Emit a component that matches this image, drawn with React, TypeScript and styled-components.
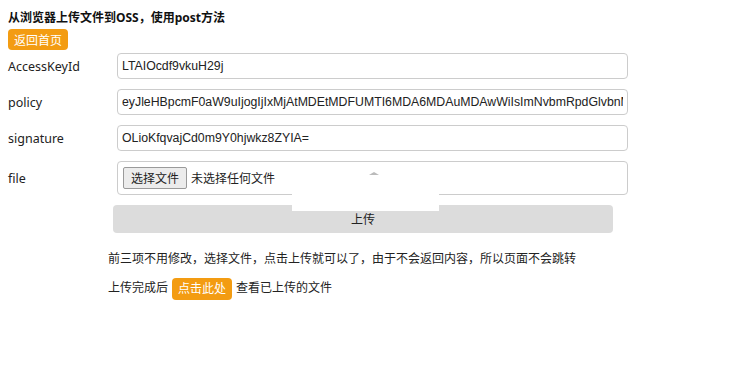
import React from 'react';
import styled, { createGlobalStyle } from 'styled-components';

const GlobalStyle = createGlobalStyle`
  body {
    margin: 8px;
    background: #fff;
    color: #222;
    font-family: "Noto Sans", "Noto Sans CJK SC", sans-serif;
    font-size: 12px;
  }
`;

const Page = styled.div`
  position: relative;
  width: 724px;
`;

const Title = styled.h1`
  margin: 0;
  font-size: 12px;
  line-height: 20px;
  font-weight: 700;
  color: #111;
`;

const OrangeButton = styled.a<{ $inline?: boolean }>`
  display: inline-flex;
  align-items: center;
  justify-content: center;
  height: ${(p) => (p.$inline ? '22px' : '21px')};
  padding: 0 6px;
  margin: ${(p) => (p.$inline ? '0 4px 0 4px' : '1px 0 0')};
  background: #f39c12;
  color: #fff;
  border-radius: 4px;
  font-size: 12px;
  text-decoration: none;
  vertical-align: middle;
`;

const Form = styled.form`
  display: grid;
  grid-template-columns: 109px 511px;
  row-gap: 10px;
  margin-top: 3px;
  align-items: center;
`;

const Label = styled.label`
  font-size: 12.5px;
  color: #222;
`;

const Input = styled.input`
  box-sizing: border-box;
  width: 100%;
  height: 26px;
  padding: 0 4px;
  border: 1px solid #ccc;
  border-radius: 4px;
  font-family: "Liberation Sans", Arial, sans-serif;
  font-size: 12.3px;
  color: #222;
  outline: none;
`;

const FileBox = styled.div`
  box-sizing: border-box;
  height: 34px;
  display: flex;
  align-items: center;
  gap: 4px;
  padding: 0 5px;
  border: 1px solid #ccc;
  border-radius: 4px;
`;

const FileButton = styled.span`
  display: inline-flex;
  align-items: center;
  height: 20px;
  padding: 0 7px;
  background: #ececec;
  border: 1px solid #9a9a9a;
  border-radius: 2px;
  font-size: 12px;
  color: #222;
`;

const FileText = styled.span`
  font-size: 12px;
  color: #222;
`;

const Submit = styled.button`
  grid-column: 1 / 3;
  margin: 0 0 0 105px;
  width: 500px;
  height: 28px;
  border: none;
  border-radius: 4px;
  background: #dcdcdc;
  font-family: "Noto Sans", "Noto Sans CJK SC", sans-serif;
  font-size: 12px;
  color: #222;
`;

const Note = styled.p`
  margin: 16px 0 0 100px;
  line-height: 20px;
  font-size: 12px;
  color: #222;
`;

const NoteLine = styled.p`
  margin: 8px 0 0 100px;
  line-height: 22px;
  font-size: 12px;
  color: #222;
`;

const Cover = styled.div`
  position: absolute;
  left: 284px;
  top: 161px;
  width: 147px;
  height: 42px;
  background: #fff;
`;

const Caret = styled.div`
  position: absolute;
  left: 77px;
  top: 3px;
  width: 0;
  height: 0;
  border-left: 5px solid transparent;
  border-right: 5px solid transparent;
  border-bottom: 3px solid #bbb;
`;

export default function App() {
  return (
    <Page>
      <GlobalStyle />
      <Title>从浏览器上传文件到OSS，使用post方法</Title>
      <OrangeButton href="#">返回首页</OrangeButton>
      <Form onSubmit={(e) => e.preventDefault()}>
        <Label>AccessKeyId</Label>
        <Input defaultValue="LTAIOcdf9vkuH29j" />
        <Label>policy</Label>
        <Input defaultValue="eyJleHBpcmF0aW9uIjogIjIxMjAtMDEtMDFUMTI6MDA6MDAuMDAwWiIsImNvbmRpdGlvbnMiOlt7ImJ1Y2tldCI6" />
        <Label>signature</Label>
        <Input defaultValue="OLioKfqvajCd0m9Y0hjwkz8ZYIA=" />
        <Label>file</Label>
        <FileBox>
          <FileButton>选择文件</FileButton>
          <FileText>未选择任何文件</FileText>
        </FileBox>
        <Submit type="submit">上传</Submit>
      </Form>
      <Note>前三项不用修改，选择文件，点击上传就可以了，由于不会返回内容，所以页面不会跳转</Note>
      <NoteLine>
        上传完成后<OrangeButton href="#" $inline>点击此处</OrangeButton>查看已上传的文件
      </NoteLine>
      <Cover>
        <Caret />
      </Cover>
    </Page>
  );
}
